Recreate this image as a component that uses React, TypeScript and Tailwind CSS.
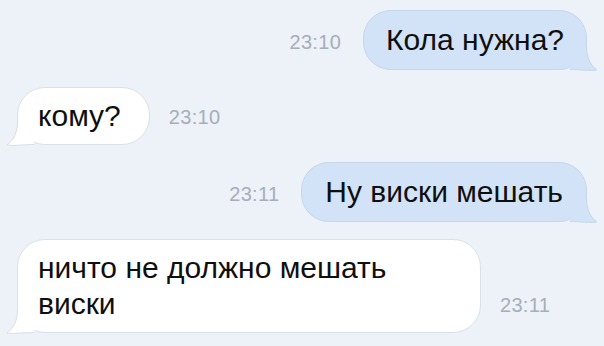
import React from 'react';

type Msg = {
  text: string;
  time: string;
  out: boolean;
  bubble: string;
};

const messages: Msg[] = [
  { text: 'Кола нужна?', time: '23:10', out: true, bubble: 'px-[22px] py-[11px]' },
  { text: 'кому?', time: '23:10', out: false, bubble: 'pl-[20px] pr-[28px] py-[10px]' },
  { text: 'Ну виски мешать', time: '23:11', out: true, bubble: 'px-[23px] py-[11px]' },
  { text: 'ничто не должно мешать виски', time: '23:11', out: false, bubble: 'w-[464px] pl-[20px] pr-[20px] py-[10px]' },
];

// little tail drawn at the bottom corner of every bubble
const Tail = ({ out }: { out: boolean }) => {
  const fill = out ? '#d3e3f7' : '#ffffff';
  const stroke = out ? '#c4d5ec' : '#d9e0e8';
  return (
    <svg
      width="28"
      height="26"
      viewBox="0 0 28 26"
      className={out ? 'absolute right-[-12px] bottom-[-2px]' : 'absolute left-[-12px] bottom-[-2px] -scale-x-100'}
    >
      <path d="M0 0 L16 0 C16 11 19 19 27 25 C20 26 10 24 0 24 Z" fill={fill} />
      <path d="M16.5 0 C16.5 11 19 19 27 25 C20 26 10 24.5 0 24.5" fill="none" stroke={stroke} strokeWidth="1" />
    </svg>
  );
};

const Time = ({ t, side }: { t: string; side: 'l' | 'r' }) => (
  <span
    className={
      'text-[20px] leading-[24px] text-[#a6aeb9] mb-[16px] tracking-[0.3px] ' +
      (side === 'l' ? 'mr-[22px]' : 'ml-[19px]')
    }
  >
    {t}
  </span>
);

export default function App() {
  return (
    <div
      className="w-[604px] h-[346px] overflow-hidden bg-[#edf2f9] flex flex-col gap-[17px] pt-[10px]"
      style={{ fontFamily: '"Liberation Sans", Arial, sans-serif' }}
    >
      {messages.map((m, i) => (
        <div key={i} className={m.out ? 'flex items-end justify-end pr-[17px]' : 'flex items-end pl-[17px]'}>
          {m.out && <Time t={m.time} side="l" />}
          <div
            className={
              'relative rounded-[28px] border text-[30px] leading-[36px] text-[#0f0f0f] ' +
              m.bubble +
              (m.out ? ' bg-[#d3e3f7] border-[#c4d5ec]' : ' bg-white border-[#d9e0e8]')
            }
          >
            <Tail out={m.out} />
            <span className="relative">{m.text}</span>
          </div>
          {!m.out && <Time t={m.time} side="r" />}
        </div>
      ))}
    </div>
  );
}
